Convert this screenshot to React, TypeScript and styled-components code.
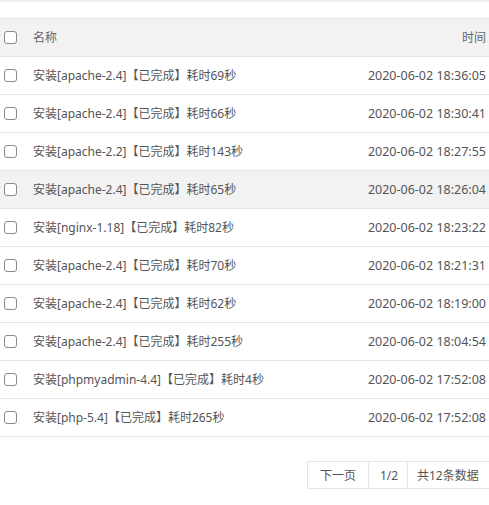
import React from 'react';
import styled, { createGlobalStyle } from 'styled-components';

const GlobalStyle = createGlobalStyle`
  html, body {
    margin: 0;
    padding: 0;
    background: #fff;
  }
  body {
    font-family: "Noto Sans", "Noto Sans CJK SC", sans-serif;
    font-size: 12px;
    color: #555;
  }
`;

const Page = styled.div`
  width: 489px;
  overflow: hidden;
`;

const TopStrip = styled.div`
  height: 2px;
  background: #f0f0f0;
  margin-bottom: 16px;
`;

const Table = styled.div`
  display: flex;
  flex-direction: column;
  border-top: 1px solid #e6e6e6;
`;

const Row = styled.div<{ $head?: boolean; $hover?: boolean }>`
  display: grid;
  grid-template-columns: 33px 1fr auto;
  align-items: center;
  height: 37px;
  border-bottom: 1px solid #e6e6e6;
  background: ${({ $head, $hover }) => ($head || $hover ? '#f2f2f2' : '#fff')};
  color: ${({ $head }) => ($head ? '#666' : '#555')};
`;

const Check = styled.span`
  display: block;
  width: 11px;
  height: 11px;
  margin-left: 4px;
  margin-top: -1px;
  border: 1px solid #8a8a8a;
  border-radius: 3px;
  background: #fff;
`;

const Name = styled.span`
  white-space: nowrap;
  margin-top: -1px;
`;

const Time = styled.span<{ $head?: boolean }>`
  padding-right: 3px;
  text-align: right;
  white-space: nowrap;
  font-size: ${({ $head }) => ($head ? '12px' : '12.5px')};
  margin-top: -1px;
`;

const Pager = styled.div`
  display: flex;
  margin-top: 24px;
  padding-left: 307px;
`;

const PagerBox = styled.div`
  display: flex;
  flex-shrink: 0;
  border: 1px solid #e6e6e6;
  border-right: none;
  height: 26px;
`;

const PagerCell = styled.span<{ $w: number; $pad: number }>`
  display: flex;
  align-items: center;
  width: ${({ $w }) => $w}px;
  padding-left: ${({ $pad }) => $pad}px;
  box-sizing: border-box;
  border-right: 1px solid #e6e6e6;
  color: #555;
  font-size: 12px;
  white-space: nowrap;
`;

const rows = [
  ['安装[apache-2.4]【已完成】耗时69秒', '2020-06-02 18:36:05'],
  ['安装[apache-2.4]【已完成】耗时66秒', '2020-06-02 18:30:41'],
  ['安装[apache-2.2]【已完成】耗时143秒', '2020-06-02 18:27:55'],
  ['安装[apache-2.4]【已完成】耗时65秒', '2020-06-02 18:26:04'],
  ['安装[nginx-1.18]【已完成】耗时82秒', '2020-06-02 18:23:22'],
  ['安装[apache-2.4]【已完成】耗时70秒', '2020-06-02 18:21:31'],
  ['安装[apache-2.4]【已完成】耗时62秒', '2020-06-02 18:19:00'],
  ['安装[apache-2.4]【已完成】耗时255秒', '2020-06-02 18:04:54'],
  ['安装[phpmyadmin-4.4]【已完成】耗时4秒', '2020-06-02 17:52:08'],
  ['安装[php-5.4]【已完成】耗时265秒', '2020-06-02 17:52:08'],
];

export default function App() {
  return (
    <Page>
      <GlobalStyle />
      <TopStrip />
      <Table>
        <Row $head>
          <Check />
          <Name>名称</Name>
          <Time $head>时间</Time>
        </Row>
        {rows.map(([name, time], i) => (
          <Row key={i} $hover={i === 3}>
            <Check />
            <Name>{name}</Name>
            <Time>{time}</Time>
          </Row>
        ))}
      </Table>
      <Pager>
        <PagerBox>
          <PagerCell $w={61} $pad={12}>下一页</PagerCell>
          <PagerCell $w={39} $pad={11}>1/2</PagerCell>
          <PagerCell $w={90} $pad={9}>共12条数据</PagerCell>
        </PagerBox>
      </Pager>
    </Page>
  );
}
